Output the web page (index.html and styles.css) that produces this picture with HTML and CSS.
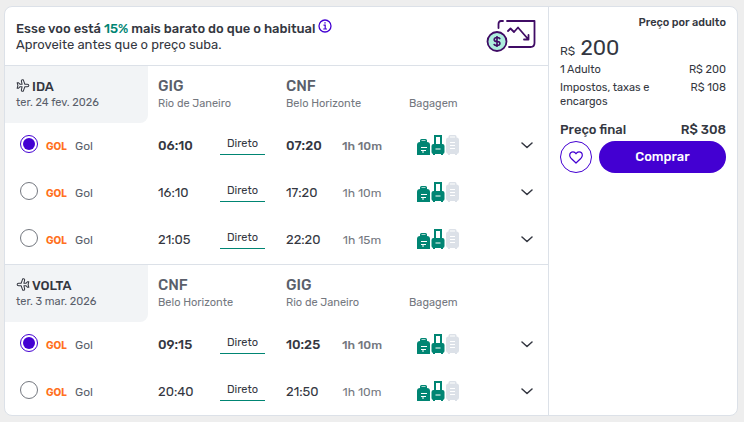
FILE: index.html
```html
<!DOCTYPE html>
<html lang="pt-BR">
<head>
<meta charset="utf-8">
<meta name="viewport" content="width=device-width, initial-scale=1">
<title>Voos GIG – CNF</title>
<link rel="stylesheet" href="styles.css">
</head>
<body>
<svg class="sprite" aria-hidden="true">
  <symbol id="bags" viewBox="0 0 42 20">
    <g fill="#008573">
      <path d="M3 8V5.500A1.500 1.500 0 0 1 4.500 4h4A1.500 1.500 0 0 1 10 5.500V8z"/>
      <path d="M3 7h7a3 3 0 0 1 3 3v9.500a.5.5 0 0 1-.5.5H.5a.5.5 0 0 1-.5-.5V10a3 3 0 0 1 3-3z"/>
      <path d="M17 10V0h8v10h-2V2h-4v8z"/>
      <path d="M16.500 9h9a2 2 0 0 1 2 2v6a2 2 0 0 1-1.500 2v1h-2v-1h-6v1h-2v-1a2 2 0 0 1-1.500-2v-6a2 2 0 0 1 2-2z"/>
    </g>
    <path d="M4.500 5.500h4" stroke="#a9d5ce" fill="none"/>
    <path d="M4 12.500h6M4 15.500h5M5 17h2M18.500 14h5" stroke="#fff" fill="none"/>
    <g fill="#dce1e8">
      <path d="M31.500 3V1.500A1.500 1.500 0 0 1 33 0h5a1.500 1.500 0 0 1 1.500 1.500V3H38V1.500h-5V3z"/>
      <path d="M31.500 2.500h8A2.500 2.500 0 0 1 42 5v11.500a2.500 2.500 0 0 1-2 2.500v1h-2v-1h-5v1h-2v-1a2.500 2.500 0 0 1-2-2.500V5a2.500 2.500 0 0 1 2.500-2.500z"/>
    </g>
    <path d="M33 7.500h5M33 10.500h5M33 13.500h5" stroke="#fff" fill="none"/>
  </symbol>
  <symbol id="chevron" viewBox="0 0 12 7">
    <path d="M1 1l5 4.500L11 1" fill="none" stroke="#343741" stroke-width="1.500" stroke-linecap="round" stroke-linejoin="round"/>
  </symbol>
  <symbol id="plane" viewBox="0 0 14 14">
    <path d="M.7 4H2L3.600 5.600H6L5.200 2Q5.200.7 6.400.7H7.200L9 5.600h2.600q1.700.2 1.700 1.400T11.600 8.400H9L7.200 13.300H6.400Q5.200 13.300 5.200 12L6 8.400H3.600L2 10H.7L1.500 7z" fill="none" stroke="#343741" stroke-width="1.100" stroke-linejoin="round"/>
  </symbol>
</svg>

<main class="card">
  <div class="flights">
    <header class="notice">
      <div class="notice-text">
        <h1>Esse voo está <em>15%</em> mais barato do que o habitual
          <svg class="info" viewBox="0 0 14 14" aria-hidden="true"><circle cx="7" cy="7" r="6" fill="none" stroke="#4300d2" stroke-width="1.300"/><path d="M5.500 6.200H7.200V10M5.200 10h3.800" fill="none" stroke="#4300d2" stroke-width="1.200"/><path d="M6.300 3.200h1.400v1.400H6.300z" fill="#4300d2"/></svg>
        </h1>
        <p>Aproveite antes que o preço suba.</p>
      </div>
      <svg class="trend" viewBox="0 0 50 34" aria-hidden="true">
        <g fill="none" stroke="#400c65" stroke-width="1.800" stroke-linecap="round" stroke-linejoin="round">
          <path d="M12.500 9V5q0-3 2.500-3h2M21 2h27.500v22q0 4-4 4H23"/>
          <path d="M22 12l2.500-2.500L28 13l4-4.500L42 20M38 20.500h4.500V16"/>
        </g>
        <circle cx="11" cy="22.500" r="9.500" fill="#aeeedd" stroke="#400c65" stroke-width="1.800"/>
        <path d="M14 20.200q-.4-1.700-3-1.700T8.200 20.500 11 22.500t2.900 2T11 26.500t-3-1.700M11 17v11" fill="none" stroke="#400c65" stroke-width="1.600"/>
      </svg>
    </header>

    <section class="leg">
      <div class="leg-head">
        <div class="leg-tag">
          <h2><svg class="plane" aria-hidden="true"><use href="#plane"/></svg>IDA</h2>
          <p>ter. 24 fev. 2026</p>
        </div>
        <div class="place"><strong>GIG</strong><span>Rio de Janeiro</span></div>
        <div class="place"><strong>CNF</strong><span>Belo Horizonte</span></div>
        <span class="bag-title">Bagagem</span>
      </div>
      <div class="option selected">
        <label class="airline"><input type="radio" name="ida" checked><b class="logo">GOL</b><span>Gol</span></label>
        <time>06:10</time><a class="stops" href="#">Direto</a><time>07:20</time><span class="duration">1h 10m</span>
        <svg class="bags" aria-hidden="true"><use href="#bags"/></svg>
        <button class="more" aria-label="Ver detalhes"><svg aria-hidden="true"><use href="#chevron"/></svg></button>
      </div>
      <div class="option">
        <label class="airline"><input type="radio" name="ida"><b class="logo">GOL</b><span>Gol</span></label>
        <time>16:10</time><a class="stops" href="#">Direto</a><time>17:20</time><span class="duration">1h 10m</span>
        <svg class="bags" aria-hidden="true"><use href="#bags"/></svg>
        <button class="more" aria-label="Ver detalhes"><svg aria-hidden="true"><use href="#chevron"/></svg></button>
      </div>
      <div class="option">
        <label class="airline"><input type="radio" name="ida"><b class="logo">GOL</b><span>Gol</span></label>
        <time>21:05</time><a class="stops" href="#">Direto</a><time>22:20</time><span class="duration">1h 15m</span>
        <svg class="bags" aria-hidden="true"><use href="#bags"/></svg>
        <button class="more" aria-label="Ver detalhes"><svg aria-hidden="true"><use href="#chevron"/></svg></button>
      </div>
    </section>

    <section class="leg">
      <div class="leg-head">
        <div class="leg-tag">
          <h2><svg class="plane back" aria-hidden="true"><use href="#plane"/></svg>VOLTA</h2>
          <p>ter. 3 mar. 2026</p>
        </div>
        <div class="place"><strong>CNF</strong><span>Belo Horizonte</span></div>
        <div class="place"><strong>GIG</strong><span>Rio de Janeiro</span></div>
        <span class="bag-title">Bagagem</span>
      </div>
      <div class="option selected">
        <label class="airline"><input type="radio" name="volta" checked><b class="logo">GOL</b><span>Gol</span></label>
        <time>09:15</time><a class="stops" href="#">Direto</a><time>10:25</time><span class="duration">1h 10m</span>
        <svg class="bags" aria-hidden="true"><use href="#bags"/></svg>
        <button class="more" aria-label="Ver detalhes"><svg aria-hidden="true"><use href="#chevron"/></svg></button>
      </div>
      <div class="option">
        <label class="airline"><input type="radio" name="volta"><b class="logo">GOL</b><span>Gol</span></label>
        <time>20:40</time><a class="stops" href="#">Direto</a><time>21:50</time><span class="duration">1h 10m</span>
        <svg class="bags" aria-hidden="true"><use href="#bags"/></svg>
        <button class="more" aria-label="Ver detalhes"><svg aria-hidden="true"><use href="#chevron"/></svg></button>
      </div>
    </section>
  </div>

  <aside class="price">
    <p class="price-title">Preço por adulto</p>
    <p class="price-main"><span>R$</span> 200</p>
    <dl>
      <div><dt>1 Adulto</dt><dd>R$ 200</dd></div>
      <div><dt>Impostos, taxas e encargos</dt><dd>R$ 108</dd></div>
      <div class="total"><dt>Preço final</dt><dd>R$ 308</dd></div>
    </dl>
    <div class="actions">
      <button class="like" aria-label="Salvar"><svg viewBox="0 0 14 13" aria-hidden="true"><path d="M7 12L2 7.200Q.7 5.800.7 4.200C.7 2.200 2.200.8 4 .8Q6 .8 7 2.800 8 .8 10 .8c1.800 0 3.300 1.400 3.300 3.400Q13.300 5.800 12 7.200z" fill="none" stroke="#4300d2" stroke-width="1.200" stroke-linejoin="round"/></svg></button>
      <button class="buy">Comprar</button>
    </div>
  </aside>
</main>
</body>
</html>
```

FILE: styles.css
```css
* { box-sizing: border-box; }
body {
  margin: 0;
  padding: 6px 6px 6px 4px;
  background: #eee;
  color: #343741;
  font-family: Rubik, Roboto, "Liberation Sans", sans-serif;
  font-size: 12px;
  line-height: 16px;
}
h1, h2, p, dl, dd { margin: 0; }
button { font: inherit; cursor: pointer; }
.sprite { display: none; }

.card {
  display: flex;
  background: #fff;
  border: 1px solid #dce1e8;
  border-radius: 8px;
  overflow: hidden;
}
.flights { flex: 1; min-width: 0; }

.notice {
  display: flex;
  align-items: center;
  justify-content: space-between;
  height: 58px;
  padding: 0 12px 0 11px;
}
.notice h1 { font-size: 13px; font-weight: 500; }
.notice em { font-style: normal; color: #008573; }
.notice p { font-size: 13px; }
.info { width: 14px; height: 14px; }
.trend { width: 50px; height: 34px; }

.leg { border-top: 1px solid #dce1e8; }
.leg-head, .option {
  display: grid;
  grid-template-columns: 153px 128px 123px 1fr;
}
.leg-head { height: 57px; }
.leg-tag {
  width: 143px;
  padding: 13px 11px 0;
  background: #f2f4f6;
  border-bottom-right-radius: 8px;
  color: #5a5f6b;
  font-size: 11px;
}
.leg-tag h2 {
  display: flex;
  gap: 2px;
  color: #343741;
  font-size: 13px;
  font-weight: 500;
}
.plane { width: 14px; height: 13px; }
.back { transform: scaleX(-1); }
.place { padding-top: 12px; color: #74787f; }
.place strong { display: block; color: #5a5f6b; font-size: 15px; font-weight: 500; }
.place span { display: block; padding-top: 2px; font-size: 11px; }
.bag-title { padding-top: 30px; color: #74787f; font-size: 11px; }

.option {
  grid-template-columns: 153px 62px 66px 46px 60px 1fr 42px;
  align-items: center;
  height: 47px;
  padding-bottom: 2px;
}
.leg:last-child .option:last-child { height: 46px; padding-bottom: 1px; }
.airline { display: flex; align-items: center; padding-left: 15px; color: #5a5f6b; }
input {
  appearance: none;
  display: grid;
  place-items: center;
  width: 18px;
  height: 18px;
  margin: 0 8px 4px 0;
  border: 1px solid #74787f;
  border-radius: 50%;
}
input:checked { border-color: #4300d2; }
input:checked::before {
  content: "";
  width: 12px;
  height: 12px;
  border-radius: 50%;
  background: #4300d2;
}
.logo { width: 29px; color: #ff7020; font: 800 10px/16px Inter, sans-serif; }
time { font-size: 13px; }
.stops {
  width: 45px;
  padding-bottom: 2px;
  border-bottom: 1px solid #008573;
  color: #343741;
  font-size: 11px;
  text-align: center;
  text-decoration: none;
}
.duration { color: #74787f; text-align: center; }
.selected time, .selected .duration { font-weight: 500; }
.bags { width: 42px; height: 20px; margin: 0 0 2px 25px; }
.more {
  display: flex;
  justify-content: center;
  padding: 0;
  border: 0;
  background: none;
}
.more svg { width: 12px; height: 7px; }

.price {
  width: 189px;
  padding: 8px 11px;
  border-left: 1px solid #dce1e8;
  font-size: 11px;
}
.price-title { font-weight: 500; text-align: right; }
.price-main { padding-top: 5px; font-size: 21px; line-height: 24px; }
.price-main span { font-size: 12px; }
dl > div { display: flex; justify-content: space-between; padding-bottom: 4px; line-height: 14px; }
dt { max-width: 100px; }
dl .total { padding: 8px 0 2px; font-size: 13px; line-height: 18px; font-weight: 500; }
.actions { display: flex; gap: 7px; }
.like {
  display: grid;
  place-items: center;
  width: 32px;
  height: 32px;
  padding: 0;
  border: 1px solid #4300d2;
  border-radius: 50%;
  background: #fff;
}
.like svg { width: 14px; height: 13px; }
.buy {
  flex: 1;
  border: 0;
  border-radius: 16px;
  background: #4300d2;
  color: #fff;
  font-size: 13px;
  font-weight: 500;
}
```
